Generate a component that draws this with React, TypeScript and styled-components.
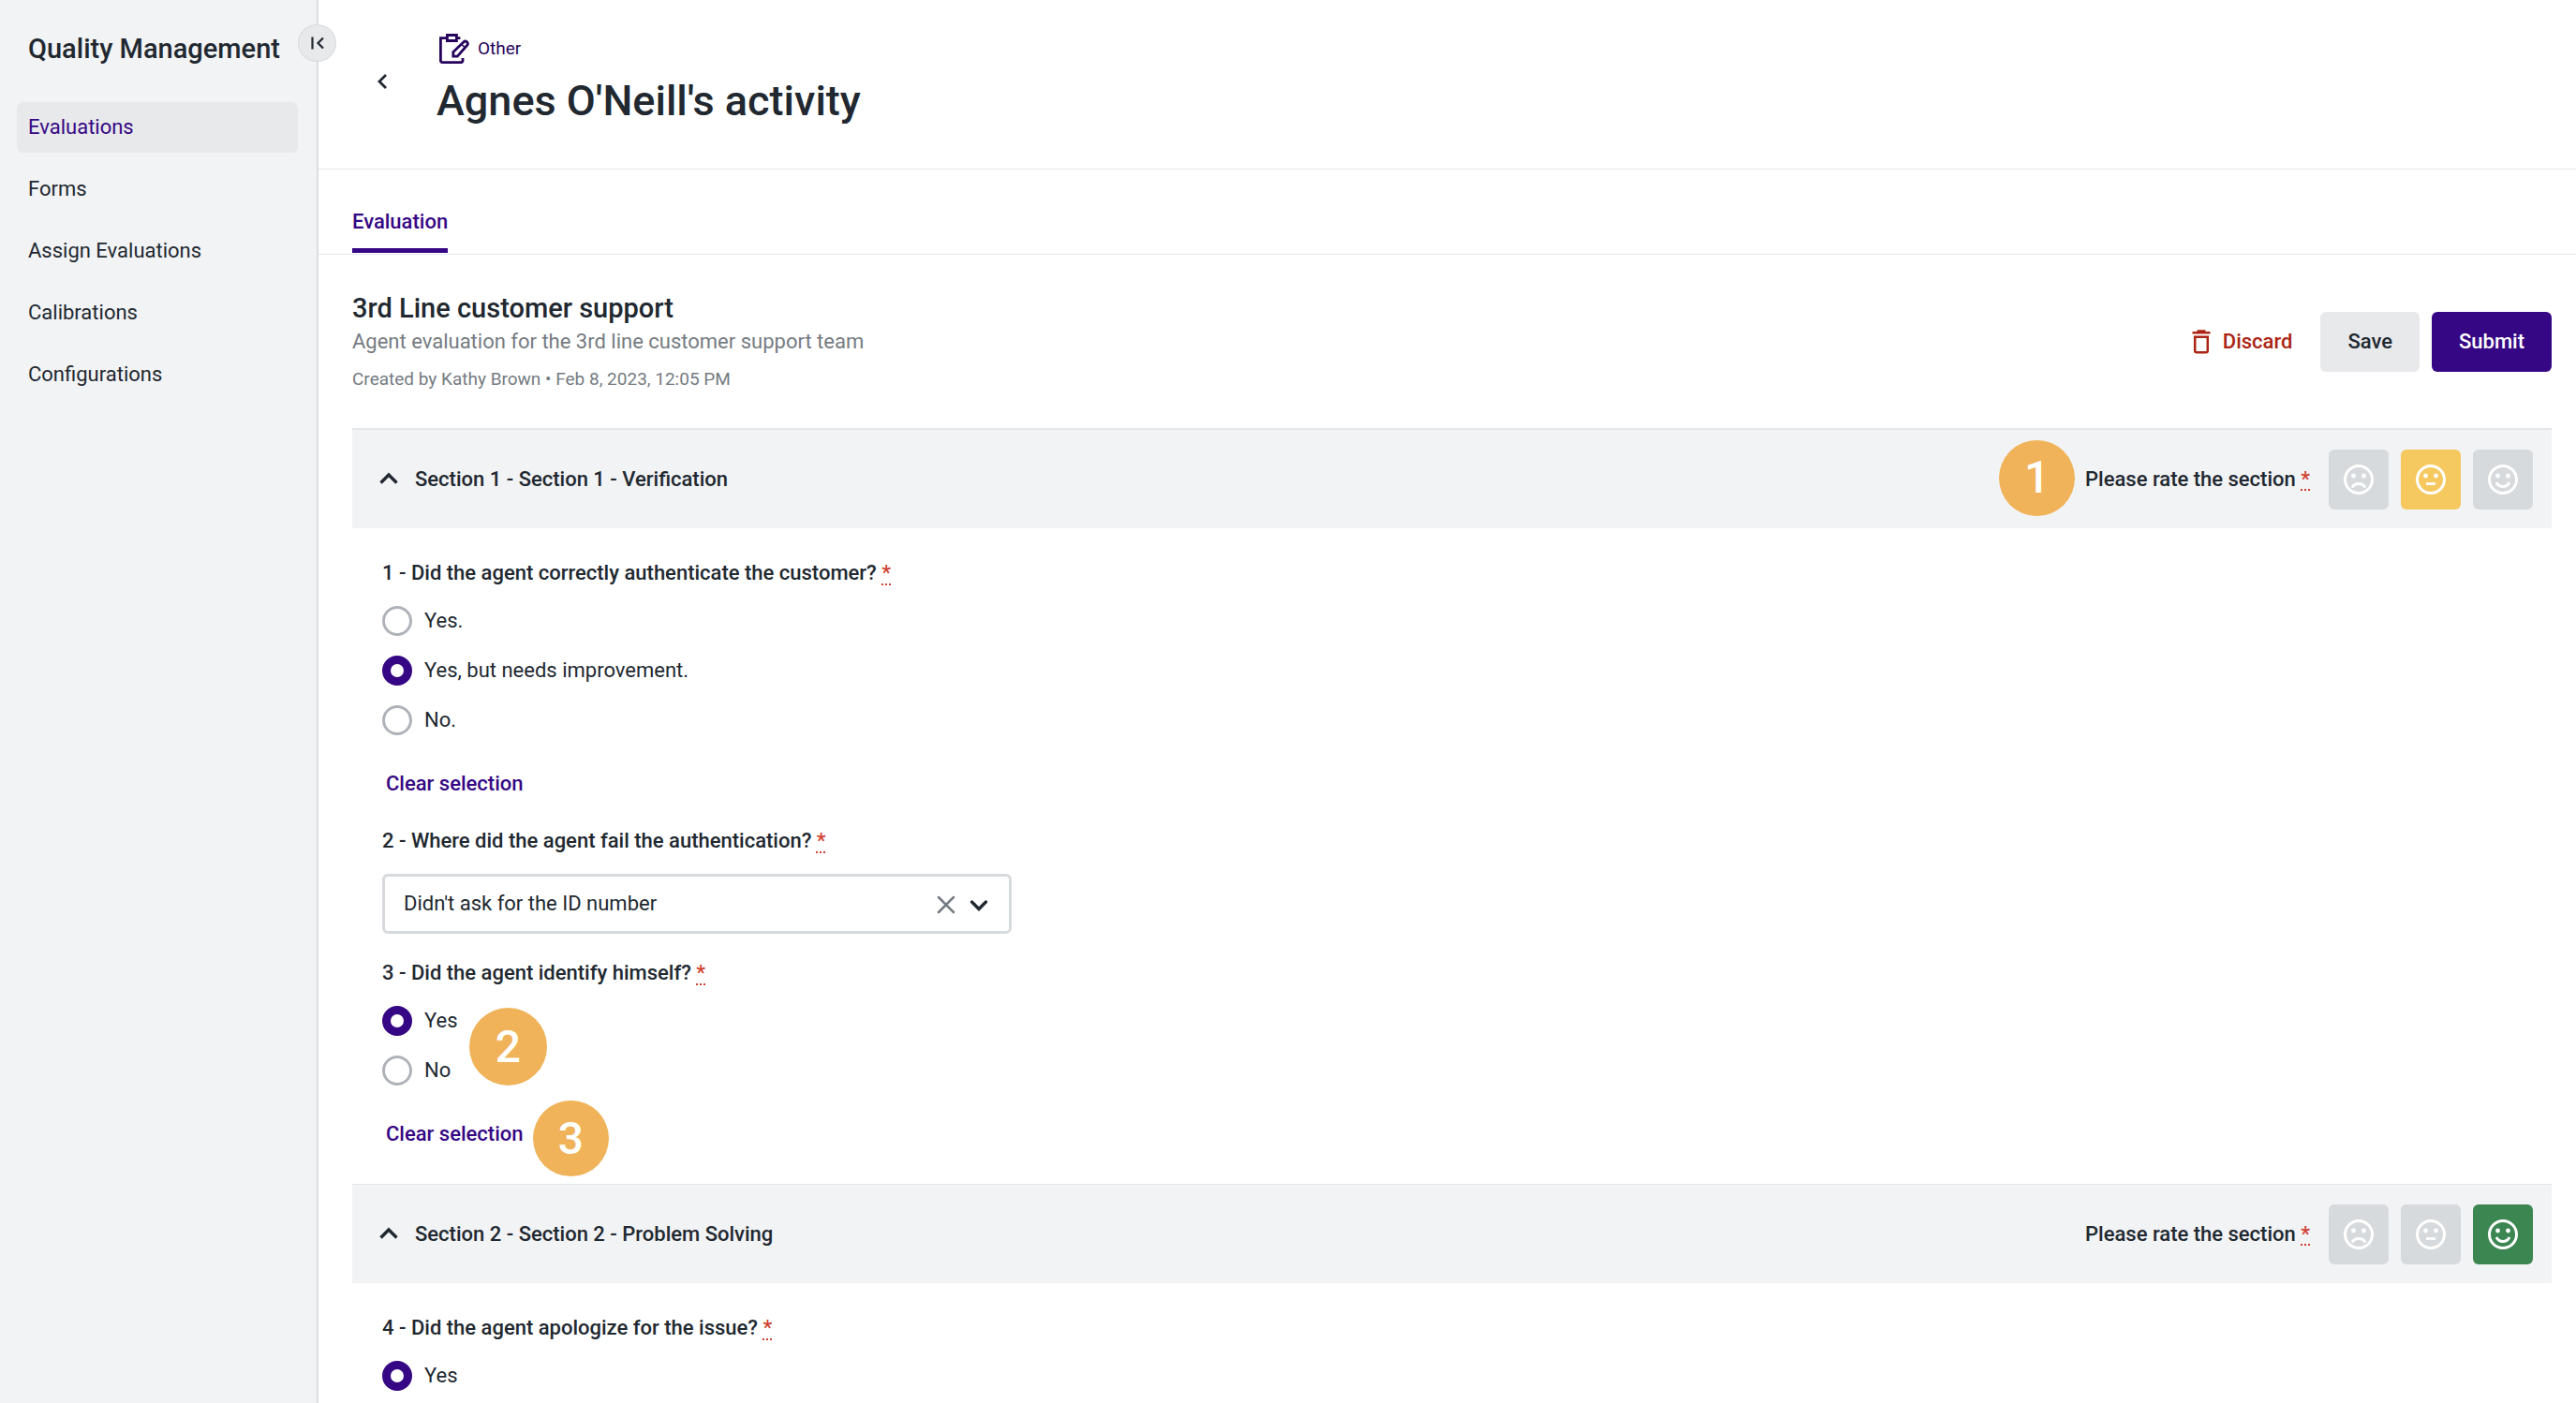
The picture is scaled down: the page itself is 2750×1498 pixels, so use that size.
import React, { useState } from 'react';
import styled, { createGlobalStyle } from 'styled-components';

const ink = '#212830';
const purple = '#360784';

const GlobalStyle = createGlobalStyle`
  * { box-sizing: border-box; }
  body { margin: 0; background: #fff; color: ${ink}; font-family: Roboto, "Liberation Sans", sans-serif; font-size: 22px; line-height: 32px; }
  button, select, input { font: inherit; color: inherit; }
  h1, h2, p, fieldset, legend { margin: 0; padding: 0; border: 0; }
  svg { display: block; flex: none; }
`;

const Page = styled.div`
  display: flex;
  min-height: 100vh;
`;

const Sidebar = styled.aside`
  position: relative;
  flex: none;
  width: 340px;
  padding: 36px 20px 0 18px;
  background: #f2f3f5;
  border-right: 2px solid #dcdee0;
`;

const SidebarTitle = styled.p`
  padding-left: 12px;
  font-size: 29px;
  font-weight: 500;
  white-space: nowrap;
`;

const NavList = styled.nav`
  display: flex;
  flex-direction: column;
  gap: 12px;
  padding-top: 41px;
`;

const NavLink = styled.a<{ $active?: boolean }>`
  padding: 11px 12px;
  border-radius: 6px;
  text-decoration: none;
  color: ${(p) => (p.$active ? purple : ink)};
  background: ${(p) => (p.$active ? '#e8e9eb' : 'transparent')};
`;

const CollapseButton = styled.button`
  position: absolute;
  top: 26px;
  right: -21px;
  display: grid;
  place-items: center;
  width: 41px;
  height: 40px;
  padding: 0;
  border: 1px solid #d7dadd;
  border-radius: 50%;
  background: #e8e9eb;
`;

const Main = styled.main`
  flex: 1;
  min-width: 0;
`;

const Header = styled.header`
  display: flex;
  align-items: flex-start;
  padding: 32px 36px 40px 48px;
  border-bottom: 1px solid #e5e6e8;
`;

const BackButton = styled.button`
  display: grid;
  place-items: center;
  width: 40px;
  height: 40px;
  margin-top: 35px;
  margin-right: 36px;
  padding: 0;
  border: 0;
  background: none;
`;

const Kind = styled.p`
  display: flex;
  align-items: center;
  gap: 9px;
  height: 40px;
  margin-bottom: 4px;
  padding-left: 5px;
  font-size: 19px;
  color: #27045c;
`;

const PageTitle = styled.h1`
  padding-left: 2px;
  font-size: 45px;
  font-weight: 500;
  line-height: 64px;
`;

const Tabs = styled.nav`
  display: flex;
  padding: 36px 36px 1px;
  border-bottom: 1px solid #e5e6e8;
`;

const Tab = styled.a`
  padding: 4px 0 12px;
  border-bottom: 5px solid ${purple};
  color: ${purple};
  font-weight: 500;
  text-decoration: none;
`;

const Content = styled.div`
  padding: 37px 26px 0 36px;
`;

const FormHead = styled.div`
  display: flex;
  align-items: center;
  justify-content: space-between;
  padding-bottom: 36px;
`;

const FormName = styled.h2`
  font-size: 29px;
  font-weight: 500;
  line-height: 40px;
`;

const Muted = styled.p<{ $small?: boolean }>`
  padding-top: ${(p) => (p.$small ? '8px' : '0')};
  font-size: ${(p) => (p.$small ? '19px' : '22px')};
  color: #757b82;
`;

const Actions = styled.div`
  display: flex;
  gap: 13px;
`;

const ActionButton = styled.button<{ $kind: 'plain' | 'soft' | 'solid' }>`
  display: flex;
  align-items: center;
  gap: 13px;
  height: 64px;
  padding: 0 ${(p) => (p.$kind === 'plain' ? '17px' : '29px')};
  border: 0;
  border-radius: 6px;
  font-weight: 500;
  color: ${(p) => ({ plain: '#ab2414', soft: ink, solid: '#fff' })[p.$kind]};
  background: ${(p) => ({ plain: 'none', soft: '#e8e9eb', solid: purple })[p.$kind]};
`;

const SectionBar = styled.div<{ $first?: boolean }>`
  display: flex;
  align-items: center;
  justify-content: space-between;
  height: ${(p) => (p.$first ? '107px' : '106px')};
  padding: 0 20px 0 28px;
  border-top: ${(p) => (p.$first ? '2px' : '1px')} solid #e5e6e8;
  background: #f2f3f5;
`;

const SectionToggle = styled.button`
  display: flex;
  align-items: center;
  gap: 17px;
  padding: 0;
  border: 0;
  background: none;
  font-weight: 500;
`;

const Rating = styled.div`
  position: relative;
  display: flex;
  align-items: center;
  gap: 20px;
  font-weight: 500;
`;

const Faces = styled.div`
  display: flex;
  gap: 13px;
`;

const FaceButton = styled.button<{ $fill: string }>`
  display: grid;
  place-items: center;
  width: 64px;
  height: 64px;
  padding: 0;
  border: 0;
  border-radius: 6px;
  background: ${(p) => p.$fill};
`;

const Star = styled.abbr`
  color: #d03f30;
  text-decoration: underline dotted;
  text-underline-offset: 4px;
`;

const Questions = styled.div`
  padding: 32px 32px 8px;
`;

const Question = styled.fieldset`
  min-width: 0;
`;

const QuestionTitle = styled.legend`
  display: block;
  font-weight: 500;
`;

const Options = styled.div`
  display: flex;
  flex-direction: column;
  align-items: flex-start;
  gap: 21px;
  padding-top: 19px;
`;

const Option = styled.label`
  position: relative;
  display: flex;
  align-items: center;
  gap: 13px;
`;

const Radio = styled.input`
  appearance: none;
  width: 32px;
  height: 32px;
  margin: 0;
  border: 3px solid #afb3b9;
  border-radius: 50%;
  background: #fff;
  &:checked { border: 9px solid ${purple}; }
`;

const ClearButton = styled.button`
  position: relative;
  display: block;
  margin: 36px 0 29px;
  padding: 0 4px;
  border: 0;
  background: none;
  color: ${purple};
  font-weight: 500;
`;

const SelectWrap = styled.div`
  position: relative;
  display: flex;
  width: 672px;
  max-width: 100%;
  margin: 19px 0 26px;
`;

const Select = styled.select`
  appearance: none;
  width: 100%;
  height: 64px;
  padding: 0 100px 0 20px;
  border: 3px solid #d7dadd;
  border-radius: 6px;
  background: #fff;
`;

const SelectIcons = styled.div`
  position: absolute;
  top: 0;
  right: 24px;
  bottom: 0;
  display: flex;
  align-items: center;
  gap: 12px;
  pointer-events: none;
`;

const ClearIcon = styled.button`
  padding: 0;
  border: 0;
  background: none;
  pointer-events: auto;
`;

const Marker = styled.span<{ $left: number; $top: number; $size: number }>`
  position: absolute;
  left: ${(p) => p.$left}px;
  top: ${(p) => p.$top}px;
  z-index: 1;
  display: grid;
  place-items: center;
  width: ${(p) => p.$size}px;
  height: ${(p) => p.$size}px;
  border-radius: 50%;
  background: #f0b359;
  color: #fff;
  font-size: 48px;
  font-weight: 500;
`;

const ClipboardIcon = () => (
  <svg width="32" height="32" viewBox="0 0 32 32" fill="none" stroke="#27045c" strokeWidth="2.800">
    <path d="M8 4.700H1.400V28.600a2 2 0 0 0 2 2H23a2 2 0 0 0 2-2V26" />
    <path d="M8.400 1.500h10v6h-10zM19 4.700h3.400" />
    <path d="M14.800 24.200v-4.700L25.800 8.900a2.500 2.500 0 0 1 3.700 3.600L19.300 24.200z" />
    <path d="M24 11.500l3 3" strokeWidth="1.500" />
  </svg>
);

const Face = ({ mood }: { mood: number }) => (
  <svg width="34" height="34" viewBox="0 0 34 34" fill="none" stroke="#fff" strokeWidth="3">
    <circle cx="17" cy="17" r="14.500" />
    <circle cx="11.500" cy="13" r="2.400" fill="#fff" stroke="none" />
    <circle cx="22.500" cy="13" r="2.400" fill="#fff" stroke="none" />
    {mood === 0 && <path d="M10 25.500c1.500-3 4-4 7-4s5.500 1 7 4" strokeWidth="2.800" />}
    {mood === 1 && <path d="M12 21.500h10" strokeWidth="2.800" />}
    {mood === 2 && <path d="M10 20c1.500 3 4 4.500 7 4.500s5.500-1.500 7-4.500" strokeWidth="2.800" />}
  </svg>
);

const Chevron = ({ up }: { up?: boolean }) => (
  <svg width="22" height="22" viewBox="0 0 22 22" fill="none" stroke={ink} strokeWidth="3.400">
    <path d={up ? 'M2.500 14.500l8.500-8.500 8.500 8.500' : 'M3.500 9l7.500 7.500 7.500-7.500'} strokeLinecap={up ? 'butt' : 'round'} />
  </svg>
);

const fills = ['#d14031', '#f6c960', '#3c8652'];
const moods = ['Negative', 'Neutral', 'Positive'];

function RatingBar({ initial, marker }: { initial: number; marker?: string }) {
  const [rating, setRating] = useState(initial);
  return (
    <Rating>
      {marker && <Marker $left={-92} $top={-10} $size={81}>{marker}</Marker>}
      <span>Please rate the section <Star>*</Star></span>
      <Faces>
        {moods.map((label, i) => (
          <FaceButton key={label} type="button" aria-label={label} $fill={rating === i ? fills[i] : '#d7dadd'} onClick={() => setRating(i)}>
            <Face mood={i} />
          </FaceButton>
        ))}
      </Faces>
    </Rating>
  );
}

type RadioQuestionProps = {
  name: string;
  title: string;
  options: string[];
  initial: string;
  clearable?: boolean;
  optionMarker?: string;
  clearMarker?: string;
};

function RadioQuestion({ name, title, options, initial, clearable, optionMarker, clearMarker }: RadioQuestionProps) {
  const [value, setValue] = useState<string | null>(initial);
  return (
    <Question>
      <QuestionTitle>{title} <Star>*</Star></QuestionTitle>
      <Options>
        {options.map((option, i) => (
          <Option key={option}>
            <Radio type="radio" name={name} checked={value === option} onChange={() => setValue(option)} />
            {option}
            {i === 0 && optionMarker && <Marker $left={93} $top={2} $size={83}>{optionMarker}</Marker>}
          </Option>
        ))}
      </Options>
      {clearable && (
        <ClearButton type="button" onClick={() => setValue(null)}>
          Clear selection
          {clearMarker && <Marker $left={161} $top={-20} $size={81}>{clearMarker}</Marker>}
        </ClearButton>
      )}
    </Question>
  );
}

export default function App() {
  const [reason, setReason] = useState('id');
  return (
    <Page>
      <GlobalStyle />
      <Sidebar>
        <SidebarTitle>Quality Management</SidebarTitle>
        <CollapseButton type="button" aria-label="Collapse menu">
          <svg width="14" height="14" viewBox="0 0 14 14" fill="none" stroke={ink} strokeWidth="2.200">
            <path d="M1.500 0.500v13M13 1.500L7.500 7l5.500 5.500" />
          </svg>
        </CollapseButton>
        <NavList>
          <NavLink href="#evaluations" $active>Evaluations</NavLink>
          <NavLink href="#forms">Forms</NavLink>
          <NavLink href="#assign">Assign Evaluations</NavLink>
          <NavLink href="#calibrations">Calibrations</NavLink>
          <NavLink href="#configurations">Configurations</NavLink>
        </NavList>
      </Sidebar>
      <Main>
        <Header>
          <BackButton type="button" aria-label="Back">
            <svg width="12" height="18" viewBox="0 0 12 18" fill="none" stroke={ink} strokeWidth="2.800">
              <path d="M10 2L3 9l7 7" />
            </svg>
          </BackButton>
          <div>
            <Kind><ClipboardIcon />Other</Kind>
            <PageTitle>Agnes O'Neill's activity</PageTitle>
          </div>
        </Header>
        <Tabs><Tab href="#evaluation">Evaluation</Tab></Tabs>
        <Content>
          <FormHead>
            <div>
              <FormName>3rd Line customer support</FormName>
              <Muted>Agent evaluation for the 3rd line customer support team</Muted>
              <Muted $small>Created by Kathy Brown • Feb 8, 2023, 12:05 PM</Muted>
            </div>
            <Actions>
              <ActionButton type="button" $kind="plain">
                <svg width="20" height="26" viewBox="0 0 20 26" fill="none" stroke="#ab2414" strokeWidth="2.500">
                  <path d="M0.500 3.200h19M5.500 1.500h9M3.200 7.800h13.600v14.700a1.800 1.800 0 0 1-1.800 1.800H5a1.800 1.800 0 0 1-1.800-1.800z" />
                </svg>
                Discard
              </ActionButton>
              <ActionButton type="button" $kind="soft">Save</ActionButton>
              <ActionButton type="button" $kind="solid">Submit</ActionButton>
            </Actions>
          </FormHead>
          <SectionBar $first>
            <SectionToggle type="button"><Chevron up />Section 1 - Section 1 - Verification</SectionToggle>
            <RatingBar initial={1} marker="1" />
          </SectionBar>
          <Questions>
            <RadioQuestion
              name="q1"
              title="1 - Did the agent correctly authenticate the customer?"
              options={['Yes.', 'Yes, but needs improvement.', 'No.']}
              initial="Yes, but needs improvement."
              clearable
            />
            <Question as="div">
              <QuestionTitle as="label" htmlFor="q2">2 - Where did the agent fail the authentication? <Star>*</Star></QuestionTitle>
              <SelectWrap>
                <Select id="q2" value={reason} onChange={(e) => setReason(e.target.value)}>
                  <option value="" />
                  <option value="id">Didn't ask for the ID number</option>
                </Select>
                <SelectIcons>
                  <ClearIcon type="button" aria-label="Clear answer" onClick={() => setReason('')}>
                    <svg width="24" height="24" viewBox="0 0 24 24" fill="none" stroke="#757b82" strokeWidth="2.500" strokeLinecap="round">
                      <path d="M4 5l16 16M20 5L4 21" />
                    </svg>
                  </ClearIcon>
                  <Chevron />
                </SelectIcons>
              </SelectWrap>
            </Question>
            <RadioQuestion
              name="q3"
              title="3 - Did the agent identify himself?"
              options={['Yes', 'No']}
              initial="Yes"
              clearable
              optionMarker="2"
              clearMarker="3"
            />
          </Questions>
          <SectionBar>
            <SectionToggle type="button"><Chevron up />Section 2 - Section 2 - Problem Solving</SectionToggle>
            <RatingBar initial={2} />
          </SectionBar>
          <Questions>
            <RadioQuestion name="q4" title="4 - Did the agent apologize for the issue?" options={['Yes']} initial="Yes" />
          </Questions>
        </Content>
      </Main>
    </Page>
  );
}
